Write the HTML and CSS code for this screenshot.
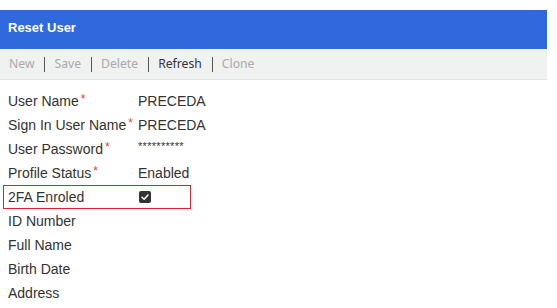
FILE: index.html
```html
<!DOCTYPE html>
<html>
<head>
<meta charset="utf-8">
<link rel="stylesheet" href="styles.css">
</head>
<body>
<div class="panel">
  <div class="header">Reset User</div>
  <div class="toolbar">
    <span class="btn disabled">New</span><span class="sep"></span>
    <span class="btn disabled">Save</span><span class="sep"></span>
    <span class="btn disabled">Delete</span><span class="sep"></span>
    <span class="btn">Refresh</span><span class="sep"></span>
    <span class="btn disabled">Clone</span>
  </div>
  <div class="form">
    <div class="row"><span class="label">User Name<span class="req">*</span></span><span class="value">PRECEDA</span></div>
    <div class="row"><span class="label">Sign In User Name<span class="req">*</span></span><span class="value">PRECEDA</span></div>
    <div class="row"><span class="label">User Password<span class="req">*</span></span><span class="value pw">**********</span></div>
    <div class="row"><span class="label">Profile Status<span class="req">*</span></span><span class="value">Enabled</span></div>
    <div class="row highlight"><span class="label">2FA Enroled</span><span class="value"><span class="check"><svg width="12" height="12" viewBox="0 0 12 12"><path d="M3 6.2 L5.1 8.2 L9 4" fill="none" stroke="#fff" stroke-width="1.5" stroke-linecap="round" stroke-linejoin="round"/></svg></span></span></div>
    <div class="row"><span class="label">ID Number</span><span class="value"></span></div>
    <div class="row"><span class="label">Full Name</span><span class="value"></span></div>
    <div class="row"><span class="label">Birth Date</span><span class="value"></span></div>
    <div class="row"><span class="label">Address</span><span class="value"></span></div>
  </div>
</div>
</body>
</html>
```
FILE: styles.css
```css
html, body { margin: 0; padding: 0; background: #fff; }
body { padding-top: 10px; font-family: "Liberation Sans", Arial, sans-serif; }
.panel { width: 547px; }
.header {
  height: 39px;
  background: #2f69db;
  color: #fff;
  font-weight: bold;
  font-size: 13px;
  line-height: 36px;
  padding-left: 8px;
}
.toolbar {
  height: 30px;
  background: #f0f1f1;
  border-bottom: 1px solid #e2e3e3;
  display: flex;
  align-items: center;
  padding-left: 9px;
  font-family: "Noto Sans", "Open Sans", sans-serif;
  font-size: 12.2px;
  color: #35323f;
}
.btn { line-height: 30px; }
.btn.disabled { color: #aaaaaa; }
.sep { width: 1px; height: 15px; background: #555; margin: 1px 9px 0 10px; }
.form { padding-top: 9px; }
.row {
  display: flex;
  height: 24px;
  align-items: center;
  font-size: 14px;
  color: #333;
  padding-left: 8px;
  box-sizing: border-box;
}
.label { width: 130px; }
.req { color: #e0453a; margin-left: 2px; font-size: 12px; position: relative; top: -3px; }
.value { color: #333; }
.pw { font-size: 11px; letter-spacing: 0.3px; position: relative; top: -3px; }
.highlight {
  width: 188px;
  margin-left: 3px;
  padding-left: 4px;
  border: 1px solid #e0202a;
}
.highlight .label { width: 131px; }
.check {
  display: inline-block;
  width: 12px; height: 12px;
  background: #333;
  border-radius: 2px;
  vertical-align: middle;
  position: relative;
  top: -1px;
}
.check svg { display: block; }
```
